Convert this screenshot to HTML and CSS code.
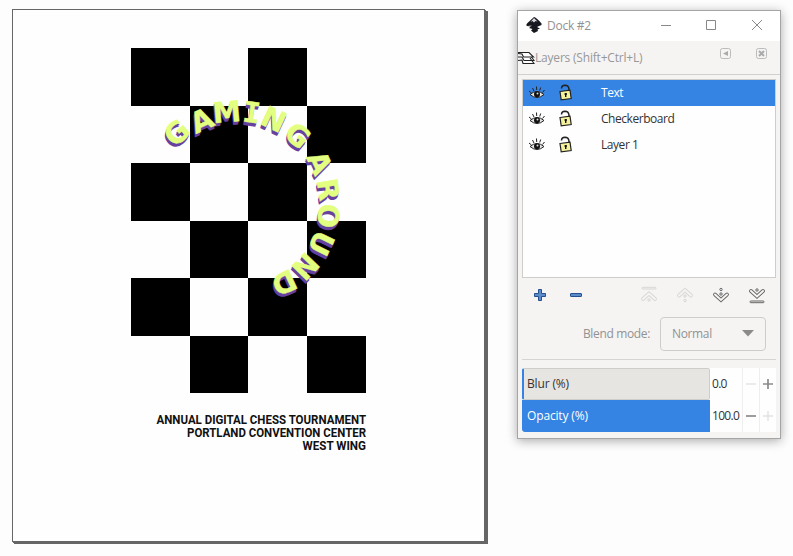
FILE: index.html
```html
<!DOCTYPE html>
<html lang="en">
<head>
<meta charset="utf-8">
<title>Chess poster</title>
<link rel="stylesheet" href="styles.css">
</head>
<body>
<svg width="0" height="0" class="defs">
  <symbol id="eye" viewBox="0 0 18 16">
    <path d="M2 9.500Q9 3.500 16 9.500Q9 15.500 2 9.500Z" fill="#e4e4e4" stroke="#222" stroke-width="1"/>
    <circle cx="9" cy="9.300" r="3" fill="#111"/><circle cx="9.500" cy="8.500" r="1" fill="#ddd"/>
    <path d="M1 6L3.500 8M4.500 3L6 6M8.500 1.500L8.700 5M12.700 2.500L11.700 5.500M16.500 5L14.500 7.500" stroke="#222" stroke-width="1"/>
  </symbol>
  <symbol id="lock" viewBox="0 0 16 17">
    <path d="M3.500 4.500Q3.500 1.500 7 1.300Q10.500 1.300 11 5V7" fill="none" stroke="#222" stroke-width="1.500"/>
    <path d="M2 7.500L12 6.200L13.200 14.500L3.200 15.800Z" fill="#f5f29a" stroke="#222" stroke-width="1.200"/>
    <path d="M7.700 9V13M6.500 10H9" stroke="#111" stroke-width="1.400"/>
  </symbol>
  <symbol id="chev" viewBox="0 0 18 18">
    <path d="M3 8.500L9 14L15 8.500" fill="none" stroke="currentColor" stroke-width="3.800" stroke-linecap="round"/>
    <path d="M3 8.500L9 14L15 8.500" fill="none" stroke="#f5f4f3" stroke-width="2" stroke-linecap="round"/>
    <circle cx="9" cy="8" r="1.200" fill="none" stroke="currentColor"/><circle cx="9" cy="3.500" r="1.200" fill="none" stroke="currentColor"/>
  </symbol>
  <symbol id="chevbar" viewBox="0 0 18 18">
    <path d="M3 5L9 10.500L15 5" fill="none" stroke="currentColor" stroke-width="3.800" stroke-linecap="round"/>
    <path d="M3 5L9 10.500L15 5" fill="none" stroke="#f5f4f3" stroke-width="2" stroke-linecap="round"/>
    <circle cx="9" cy="4" r="1.200" fill="none" stroke="currentColor"/>
    <rect x="2" y="15" width="14" height="1.700" rx=".8" fill="none" stroke="currentColor"/>
  </symbol>
</svg>
<main class="desk">
  <section class="page">
    <div class="board">
      <i class="b"></i><i></i><i class="b"></i><i></i>
      <i></i><i class="b"></i><i></i><i class="b"></i>
      <i class="b"></i><i></i><i class="b"></i><i></i>
      <i></i><i class="b"></i><i></i><i class="b"></i>
      <i class="b"></i><i></i><i class="b"></i><i></i>
      <i></i><i class="b"></i><i></i><i class="b"></i>
    </div>
    <svg class="art" width="472" height="532" viewBox="13 10 472 532">
      <defs>
        <g id="ring">
          <text transform="translate(176.500 132.500) rotate(-41)" y="10.500">G</text>
          <text transform="translate(201.500 120) rotate(-24)" y="10.500">A</text>
          <text transform="translate(226.700 111.500) rotate(-5)" y="10.500">M</text>
          <text class="mono" transform="translate(251.700 112) rotate(8)" y="10.500">I</text>
          <text transform="translate(274 119) rotate(25)" y="10.500">N</text>
          <text transform="translate(298 135) rotate(40)" y="10.500">G</text>
          <text transform="translate(320 162.500) rotate(65)" y="10.500">A</text>
          <text transform="translate(328.500 189.500) rotate(81)" y="10.500">R</text>
          <text transform="translate(328.700 216) rotate(98)" y="10.500">O</text>
          <text transform="translate(321.700 243.500) rotate(116)" y="10.500">U</text>
          <text transform="translate(305.700 266.500) rotate(134)" y="10.500">N</text>
          <text transform="translate(284.500 283) rotate(155)" y="10.500">D</text>
        </g>
      </defs>
      <use href="#ring" class="shade" x="-1" y="3.500"/>
      <use href="#ring" class="shade" x="-.5" y="2"/>
      <use href="#ring" class="lime"/>
      <g class="caption">
        <text x="156.500" y="424" textLength="209.500" lengthAdjust="spacingAndGlyphs">ANNUAL DIGITAL CHESS TOURNAMENT</text>
        <text x="187" y="437" textLength="179" lengthAdjust="spacingAndGlyphs">PORTLAND CONVENTION CENTER</text>
        <text x="302.500" y="450" textLength="63.500" lengthAdjust="spacingAndGlyphs">WEST WING</text>
      </g>
    </svg>
  </section>
  <aside class="dock">
    <header class="title">
      <svg class="logo" width="16" height="16" viewBox="0 0 16 16"><path d="M8 0Q10 0 15.500 6.500Q16.500 8.500 13 9L11 10L14 11.500L11.500 12.500L12 14L8 16L5 13.500L6.500 12L3 11L5 9.500L1 9Q-.5 8 1.500 6Z" fill="#17171f"/><path d="M8 1L11.500 4.500L9.500 4L8 5.500L6.500 4L4.500 5Z" fill="#d8d8df"/><path d="M2 8L6 8.500L5 9.500Z" fill="#777"/></svg>
      <span class="name">Dock #2</span>
      <svg width="103" height="12" viewBox="0 0 103 12" class="winbtn" fill="none" stroke="#888"><path d="M0 6.500H10M45.500 1.500H54.500V10.500H45.500ZM91 1L101 11M101 1L91 11"/></svg>
    </header>
    <div class="tab">
      <svg width="17" height="14" viewBox="0 0 17 14" fill="#fff" stroke="#222" stroke-width="1.100"><path d="M0 9.500L4 9L5 12.500H16L12 7M0 6L4 6L6 9.500H16L12 4"/><path d="M0 1.500H11L15.500 6H5.500L4 3L0 2.500"/></svg>
      <span class="tabname">Layers (Shift+Ctrl+L)</span>
      <svg class="tabbtn" width="48" height="12" viewBox="0 0 48 12" fill="none" stroke="#bbb"><rect x=".5" y=".5" width="10" height="10" rx="2"/><rect x="36.500" y=".5" width="10" height="10" rx="2"/><path d="M8 3V8L3 5.500Z" fill="#aaa" stroke="none"/><path d="M39 3L44 8M44 3L39 8" stroke="#aaa" stroke-width="2"/></svg>
    </div>
    <div class="body">
      <div class="layers">
        <div class="row on"><svg class="eye"><use href="#eye"/></svg><svg class="lock"><use href="#lock"/></svg><span>Text</span></div>
        <div class="row"><svg class="eye"><use href="#eye"/></svg><svg class="lock"><use href="#lock"/></svg><span>Checkerboard</span></div>
        <div class="row"><svg class="eye"><use href="#eye"/></svg><svg class="lock"><use href="#lock"/></svg><span>Layer 1</span></div>
      </div>
      <div class="tools">
        <svg width="12" height="12" viewBox="0 0 12 12"><path d="M4.500 .5H7.500V4.500H11.500V7.500H7.500V11.500H4.500V7.500H.5V4.500H4.500Z" fill="#5b8bc9" stroke="#25508f"/></svg>
        <svg class="minus" width="12" height="12" viewBox="0 0 12 12"><rect x=".5" y="4.500" width="11" height="3" rx=".5" fill="#5b8bc9" stroke="#25508f"/></svg>
        <svg class="mv off up first"><use href="#chevbar"/></svg>
        <svg class="mv off up"><use href="#chev"/></svg>
        <svg class="mv"><use href="#chev"/></svg>
        <svg class="mv"><use href="#chevbar"/></svg>
      </div>
      <div class="blend"><span class="bl">Blend mode:</span><div class="select"><span>Normal</span><svg width="12" height="7" viewBox="0 0 12 7"><path d="M0 0H12L6 6.500Z" fill="#8c8a89"/></svg></div></div>
      <div class="rule"></div>
      <div class="spin"><div class="bar blur">Blur (%)</div><span class="val">0.0</span><svg class="step" viewBox="0 0 34 32"><path d="M.5 0V32M17.500 0V32" stroke="#eee"/><path d="M4 16H14" stroke="#e4e4e4" stroke-width="1.500"/><path d="M21 16H31M26 11V21" stroke="#8b8b8b" stroke-width="1.700"/></svg></div>
      <div class="spin"><div class="bar opacity">Opacity (%)</div><span class="val">100.0</span><svg class="step" viewBox="0 0 34 32"><path d="M.5 0V32M17.500 0V32" stroke="#eee"/><path d="M4 16H14" stroke="#8b8b8b" stroke-width="1.700"/><path d="M21 16H31M26 11V21" stroke="#e4e4e4" stroke-width="1.500"/></svg></div>
    </div>
  </aside>
</main>
</body>
</html>
```
FILE: styles.css
```css
* { box-sizing: border-box; }
body { margin: 0; background: #fdfdfd; font: 12px "Open Sans", "Noto Sans", sans-serif; letter-spacing: -.15px; color: #333; overflow: hidden; }
svg { display: block; flex: none; }
.defs { position: absolute; }
.desk { display: flex; align-items: flex-start; gap: 32px; height: 556px; padding: 9px 0 0 12px; }
.page { position: relative; flex: none; width: 473px; height: 533px; border: 1px solid #666; background: #fefefe; box-shadow: 1px 1px 0 #666, 2px 2px 0 #666, 3px 2px 0 #666; padding: 38px 0 0 118px; }
.board { display: grid; grid-template-columns: repeat(4, 58.65px); grid-template-rows: repeat(6, 57.5px); }
.b { background: #000; }
.art { position: absolute; left: 0; top: 0; }
#ring text { font: bold 28.5px "DejaVu Sans", sans-serif; letter-spacing: 0; text-anchor: middle; }
#ring .mono { font-family: "DejaVu Sans Mono", monospace; }
.lime { fill: #e3ff80; stroke: #e3ff80; stroke-width: .4px; }
.shade { fill: #6741a0; }
.caption { font: bold 13.3px Roboto, sans-serif; letter-spacing: 0; fill: #111; }
.dock { flex: none; width: 264px; height: 429px; margin-top: 1px; border: 1px solid #a5a5a5; background: #f5f4f3; box-shadow: 0 2px 10px rgba(0,0,0,.33); }
.title { display: flex; align-items: center; height: 30px; background: #fff; padding: 0 0 2px 8px; color: #929292; }
.name { width: 60px; margin-left: 5px; letter-spacing: -.25px; }
.winbtn { margin-left: 54px; }
.tab { display: flex; align-items: center; height: 33px; color: #989898; }
.tabname { width: 116px; white-space: nowrap; letter-spacing: -.2px; }
.tabbtn { margin: -8px 0 0 69px; }
.body { border-top: 1px solid #d2d0ce; padding: 4px 4px 0; }
.layers { height: 199px; border: 1px solid #cfcdca; background: #fefefe; }
.row { display: flex; align-items: center; height: 26px; padding: 0 0 1px 5px; letter-spacing: -.45px; }
.on { background: #3584e4; color: #fff; }
.eye { width: 18px; height: 16px; }
.lock { width: 16px; height: 17px; margin: 0 27px 0 12px; }
.tools { display: flex; align-items: center; height: 36px; padding: 0 0 2px 12px; color: #666; }
.minus { margin-left: 24px; }
.mv { width: 18px; height: 18px; margin-right: 18px; }
.first { margin-left: 58px; }
.up { transform: rotate(180deg); }
.off { color: #d8d6d5; }
.blend { display: flex; align-items: center; justify-content: flex-end; height: 41px; padding: 0 10px 2px 0; color: #929292; letter-spacing: -.35px; }
.bl { margin-right: 10px; }
.select { display: flex; align-items: center; justify-content: space-between; width: 106px; height: 34px; border: 1px solid #cfcdca; border-radius: 4px; padding: 0 11px; }
.rule { height: 1px; background: #d6d4d2; margin: 4px 0 8px; }
.spin { display: flex; align-items: center; height: 32px; background: #fefefe; }
.bar { display: flex; align-items: center; width: 188px; height: 32px; padding: 0 0 1px 5px; }
.blur { background: #e6e5e2; border: 1px solid #cfcdca; border-left: 2px solid #3584e4; border-radius: 2px; padding-left: 3px; }
.opacity { background: #3584e4; color: #fff; border-radius: 0 0 0 3px; }
.val { width: 32px; padding: 0 0 1px 2px; letter-spacing: -.7px; }
.step { width: 34px; height: 32px; }
```
